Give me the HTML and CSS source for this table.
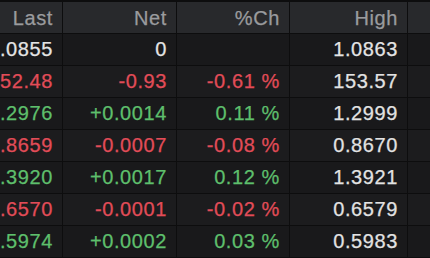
FILE: index.html
```html
<!DOCTYPE html>
<html>
<head>
<meta charset="utf-8">
<link rel="stylesheet" href="styles.css">
</head>
<body>
<div class="viewport">
  <div class="grid">
    <div class="row head">
      <div class="c">Last</div><div class="c">Net</div><div class="c">%Ch</div><div class="c">High</div><div class="c"></div>
    </div>
    <div class="row odd">
      <div class="c">1.0855</div><div class="c">0</div><div class="c"></div><div class="c">1.0863</div><div class="c"></div>
    </div>
    <div class="row even dn">
      <div class="c">152.48</div><div class="c">-0.93</div><div class="c">-0.61 %</div><div class="c w">153.57</div><div class="c"></div>
    </div>
    <div class="row odd up">
      <div class="c">1.2976</div><div class="c">+0.0014</div><div class="c">0.11 %</div><div class="c w">1.2999</div><div class="c"></div>
    </div>
    <div class="row even dn">
      <div class="c">0.8659</div><div class="c">-0.0007</div><div class="c">-0.08 %</div><div class="c w">0.8670</div><div class="c"></div>
    </div>
    <div class="row odd up">
      <div class="c">1.3920</div><div class="c">+0.0017</div><div class="c">0.12 %</div><div class="c w">1.3921</div><div class="c"></div>
    </div>
    <div class="row even dn">
      <div class="c">0.6570</div><div class="c">-0.0001</div><div class="c">-0.02 %</div><div class="c w">0.6579</div><div class="c"></div>
    </div>
    <div class="row odd up">
      <div class="c">0.5974</div><div class="c">+0.0002</div><div class="c">0.03 %</div><div class="c w">0.5983</div><div class="c"></div>
    </div>
  </div>
</div>
</body>
</html>
```
FILE: styles.css
```css
html, body {
  margin: 0;
  padding: 0;
  background: #0d0d0e;
}
.viewport {
  width: 430px;
  height: 258px;
  overflow: hidden;
  padding-top: 2px;
  box-sizing: border-box;
}
.grid {
  display: grid;
  grid-template-columns: 113px 113px 112px 117px 60px;
  grid-template-rows: 31px repeat(7, 31px);
  gap: 1px;
  margin-left: -51px;
  background: #0d0d0e;
  font-family: "Liberation Sans", Arial, sans-serif;
  font-size: 20px;
  letter-spacing: 0.6px;
  -webkit-text-stroke: 0.25px currentColor;
}
.row {
  display: contents;
}
.c {
  display: flex;
  align-items: center;
  justify-content: flex-end;
  padding-right: 9px;
  white-space: nowrap;
  color: #e4e4e4;
}
.head .c {
  background: #28292c;
  color: #9a9b9e;
  padding-top: 1px;
}
.odd .c {
  background: #19191b;
}
.even .c {
  background: #1c1c1e;
}
.dn .c {
  color: #e24c58;
}
.up .c {
  color: #5ebf6c;
}
.row .c.w {
  color: #e2e2e2;
}
```
